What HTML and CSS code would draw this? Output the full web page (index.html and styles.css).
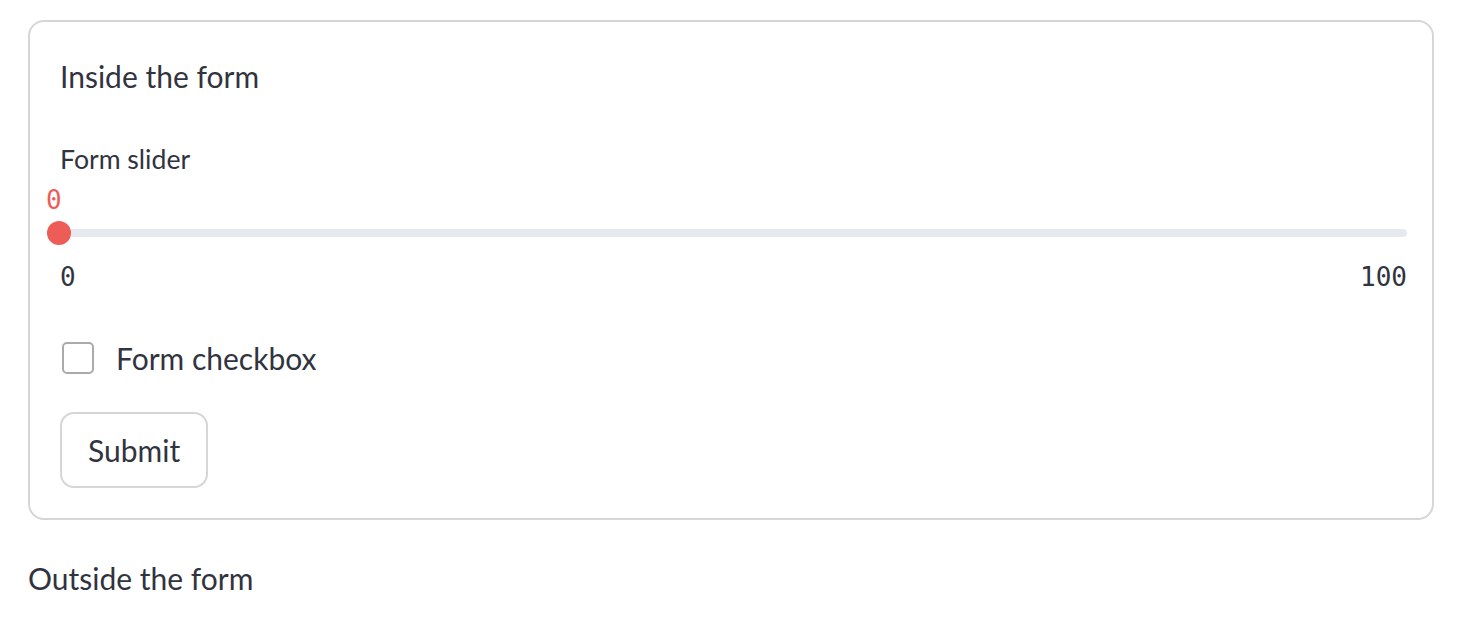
FILE: index.html
```html
<!DOCTYPE html>
<html>
<head>
<meta charset="utf-8">
<link rel="stylesheet" href="styles.css">
</head>
<body>
<main class="main">
  <form class="form">
    <p class="heading">Inside the form</p>
    <div class="slider">
      <div class="slider-label">Form slider</div>
      <div class="slider-body">
        <div class="slider-track"></div>
        <div class="slider-value">0</div>
        <div class="slider-thumb"></div>
      </div>
      <div class="slider-ticks"><span>0</span><span>100</span></div>
    </div>
    <label class="checkbox">
      <span class="checkbox-box"></span>
      <span class="checkbox-text">Form checkbox</span>
    </label>
    <div class="actions">
      <button type="button" class="btn">Submit</button>
    </div>
  </form>
  <p class="outside">Outside the form</p>
</main>
</body>
</html>
```
FILE: styles.css
```css
html, body {
  margin: 0;
  padding: 0;
  background: #ffffff;
}
body {
  font-family: "Lato", "Open Sans", sans-serif;
  color: #31333f;
}
.main {
  padding: 20px 36px 0 28px;
}
.form {
  display: flex;
  flex-direction: column;
  align-items: flex-start;
  border: 2px solid #d6d6d9;
  border-radius: 16px;
  padding: 30px 25px 30px 30px;
}
.heading {
  margin: 0;
  font-size: 30px;
  line-height: 48px;
}
.slider {
  align-self: stretch;
  margin-top: 41px;
}
.slider-label {
  font-size: 26.6px;
  line-height: 36px;
}
.slider-body {
  position: relative;
  height: 85px;
}
.slider-track {
  position: absolute;
  left: -1px;
  right: 0;
  top: 52px;
  height: 8px;
  border-radius: 4px;
  background: #e6e9ef;
}
.slider-thumb {
  position: absolute;
  left: -13px;
  top: 44px;
  width: 24px;
  height: 24px;
  border-radius: 50%;
  background: #ee5c58;
}
.slider-value {
  position: absolute;
  left: -14px;
  top: 8px;
  font-family: "DejaVu Sans Mono", monospace;
  font-size: 26px;
  line-height: 30px;
  color: #ee5c58;
}
.slider-ticks {
  display: flex;
  justify-content: space-between;
  font-family: "DejaVu Sans Mono", monospace;
  font-size: 26px;
  line-height: 30px;
}
.checkbox {
  display: flex;
  align-items: center;
  margin-top: 46px;
  line-height: 40px;
}
.checkbox-box {
  box-sizing: border-box;
  width: 32px;
  height: 32px;
  margin-left: 2px;
  border: 2px solid #a9a9ae;
  border-radius: 5px;
}
.checkbox-text {
  margin-left: 22px;
  font-size: 30px;
}
.actions {
  margin-top: 34px;
}
.btn {
  box-sizing: border-box;
  height: 76px;
  padding: 0 26px;
  border: 2px solid #d6d6d9;
  border-radius: 14px;
  background: #ffffff;
  font-family: "Lato", "Open Sans", sans-serif;
  font-size: 30px;
  line-height: 40px;
  color: #31333f;
}
.outside {
  margin: 38px 0 0 0;
  font-size: 30px;
  line-height: 40px;
}
```
